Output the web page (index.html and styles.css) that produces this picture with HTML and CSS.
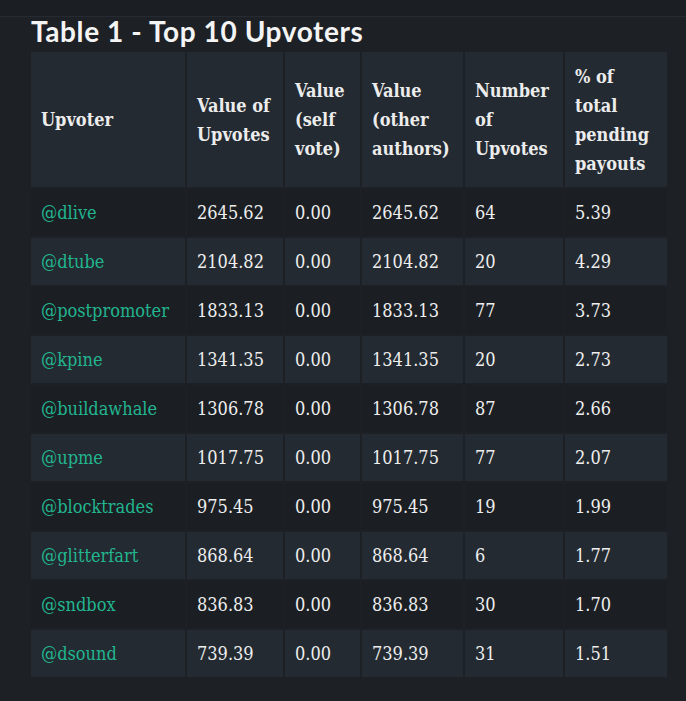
FILE: index.html
```html
<!DOCTYPE html>
<html>
<head>
<meta charset="utf-8">
<link rel="stylesheet" href="styles.css">
</head>
<body>
<div class="topbar"></div>
<main class="content">
  <h2 class="title">Table 1 - Top 10 Upvoters</h2>
  <table class="data">
    <colgroup>
      <col class="c1"><col class="c2"><col class="c3"><col class="c4"><col class="c5"><col class="c6">
    </colgroup>
    <thead>
      <tr>
        <th>Upvoter</th>
        <th>Value of Upvotes</th>
        <th>Value (self vote)</th>
        <th>Value (other authors)</th>
        <th>Number of Upvotes</th>
        <th>% of total pending payouts</th>
      </tr>
    </thead>
    <tbody>
      <tr><td><a>@dlive</a></td><td>2645.62</td><td>0.00</td><td>2645.62</td><td>64</td><td>5.39</td></tr>
      <tr><td><a>@dtube</a></td><td>2104.82</td><td>0.00</td><td>2104.82</td><td>20</td><td>4.29</td></tr>
      <tr><td><a>@postpromoter</a></td><td>1833.13</td><td>0.00</td><td>1833.13</td><td>77</td><td>3.73</td></tr>
      <tr><td><a>@kpine</a></td><td>1341.35</td><td>0.00</td><td>1341.35</td><td>20</td><td>2.73</td></tr>
      <tr><td><a>@buildawhale</a></td><td>1306.78</td><td>0.00</td><td>1306.78</td><td>87</td><td>2.66</td></tr>
      <tr><td><a>@upme</a></td><td>1017.75</td><td>0.00</td><td>1017.75</td><td>77</td><td>2.07</td></tr>
      <tr><td><a>@blocktrades</a></td><td>975.45</td><td>0.00</td><td>975.45</td><td>19</td><td>1.99</td></tr>
      <tr><td><a>@glitterfart</a></td><td>868.64</td><td>0.00</td><td>868.64</td><td>6</td><td>1.77</td></tr>
      <tr><td><a>@sndbox</a></td><td>836.83</td><td>0.00</td><td>836.83</td><td>30</td><td>1.70</td></tr>
      <tr><td><a>@dsound</a></td><td>739.39</td><td>0.00</td><td>739.39</td><td>31</td><td>1.51</td></tr>
    </tbody>
  </table>
</main>
</body>
</html>
```
FILE: styles.css
```css
html, body {
  margin: 0;
  padding: 0;
  background: #1d2126;
  height: 100%;
}
body {
  font-family: "DejaVu Serif Condensed", "DejaVu Serif", serif;
  font-stretch: condensed;
  color: #eeeeee;
  overflow: hidden;
}
.topbar {
  height: 16px;
  background: #1b1f24;
  border-bottom: 1px solid #262b31;
}
.content {
  padding: 0 19px 0 29px;
}
.title {
  margin: 0;
  padding: 0 0 0 2px;
  font-family: "Lato", "Noto Sans", sans-serif;
  font-stretch: normal;
  font-weight: 700;
  font-size: 28px;
  letter-spacing: 0.6px;
  line-height: 28px;
  height: 33px;
  color: #f4f4f4;
}
.data {
  border-collapse: separate;
  border-spacing: 2px;
  table-layout: fixed;
  width: 640px;
  font-size: 18px;
}
.c1 { width: 154px; }
.c2 { width: 96px; }
.c3 { width: 75px; }
.c4 { width: 101px; }
.c5 { width: 98px; }
.c6 { width: 102px; }
.data th, .data td {
  text-align: left;
  padding: 9px 10px;
  line-height: 29px;
}
.data th {
  background: #232a31;
  font-weight: 600;
  color: #ececec;
  vertical-align: middle;
  height: 117px;
}
.data td {
  vertical-align: middle;
  height: 29px;
  white-space: nowrap;
}
.data tbody tr:nth-child(odd) td {
  background: #1b1f24;
}
.data tbody tr:nth-child(even) td {
  background: #232a31;
}
.data a {
  color: #22b58f;
  text-decoration: none;
}
```
